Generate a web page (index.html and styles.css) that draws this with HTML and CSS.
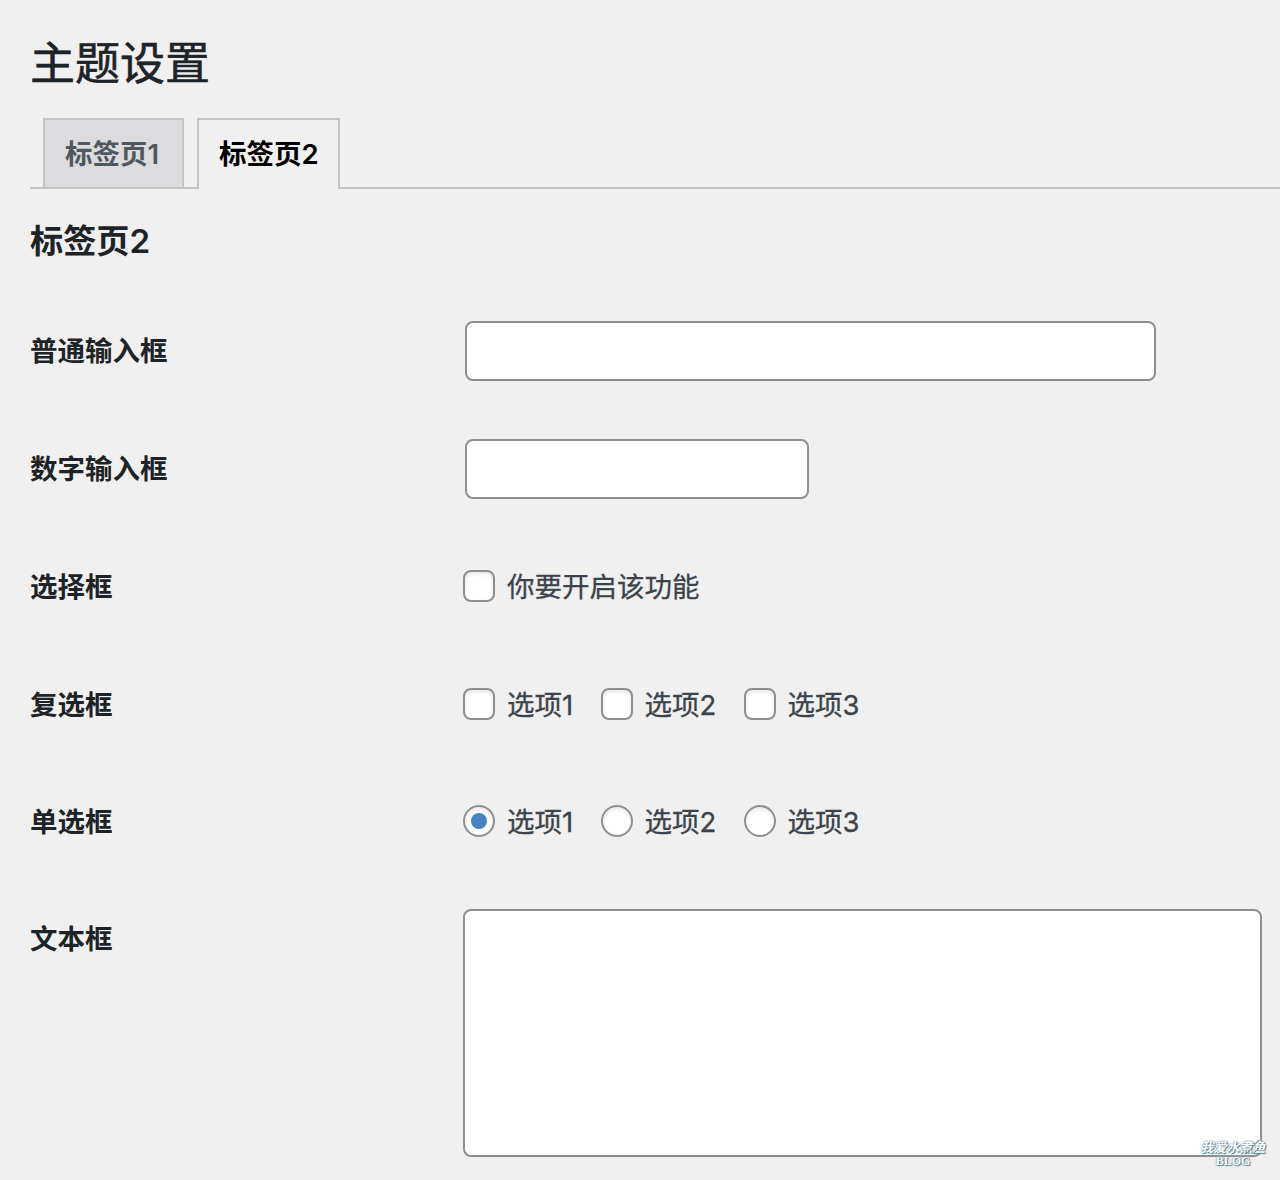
FILE: index.html
```html
<!DOCTYPE html>
<html lang="zh-CN">
<head>
<meta charset="utf-8">
<title>主题设置</title>
<link rel="stylesheet" href="styles.css">
</head>
<body>
<main class="wrap">
  <h1 class="page-title">主题设置</h1>
  <nav class="tabs">
    <a class="tab">标签页1</a>
    <a class="tab tab-active">标签页2</a>
  </nav>
  <h2 class="section-title">标签页2</h2>
  <form class="form">
    <div class="row"><label class="label" for="text">普通输入框</label><input class="input input-wide" id="text" type="text"></div>
    <div class="row"><label class="label" for="number">数字输入框</label><input class="input input-number" id="number" type="text" inputmode="numeric"></div>
    <div class="row"><span class="label">选择框</span>
      <div class="options"><label class="option"><input class="check" type="checkbox">你要开启该功能</label></div>
    </div>
    <div class="row row-short"><span class="label">复选框</span>
      <div class="options">
        <label class="option"><input class="check" type="checkbox">选项1</label>
        <label class="option"><input class="check" type="checkbox">选项2</label>
        <label class="option"><input class="check" type="checkbox">选项3</label>
      </div>
    </div>
    <div class="row row-short"><span class="label">单选框</span>
      <div class="options">
        <label class="option"><input class="check radio" type="radio" name="choice" checked>选项1</label>
        <label class="option"><input class="check radio" type="radio" name="choice">选项2</label>
        <label class="option"><input class="check radio" type="radio" name="choice">选项3</label>
      </div>
    </div>
    <div class="row row-area"><label class="label" for="area">文本框</label><textarea class="area" id="area"></textarea></div>
  </form>
</main>
<div class="watermark">
  <span class="mark-name">我爱水煮鱼</span>
  <span class="mark-blog">BLOG</span>
  <svg class="grip" viewBox="0 0 16 16"><path d="M1 15 14 1M8 15l6-6"/></svg>
</div>
</body>
</html>
```

FILE: styles.css
```css
* { box-sizing: border-box; }
body {
  margin: 0;
  height: 1180px;
  overflow: hidden;
  position: relative;
  background: #f0f0f0;
  color: #1d2327;
  font-family: Inter, "Noto Sans CJK SC", sans-serif;
  font-size: 27.5px;
}
.wrap { padding: 36px 0 0 30px; }
.page-title {
  margin: 0;
  font-size: 45px;
  line-height: 56px;
  font-weight: 400;
  -webkit-text-stroke: .6px;
}
.tabs {
  display: flex;
  gap: 14px;
  height: 71px;
  margin-top: 26px;
  padding-left: 13px;
  border-bottom: 2px solid #c3c4c7;
}
.tab {
  height: 69px;
  width: 141px;
  padding-left: 20px;
  border: 2px solid #c3c4c7;
  border-bottom: 0;
  background: #dcdcde;
  color: #50575e;
  font-weight: 600;
  line-height: 69px;
  white-space: nowrap;
}
.tab-active {
  width: 143px;
  height: 71px;
  margin-left: -1px;
  background: #f0f0f0;
  color: #000;
}
.section-title { margin: 28px 0 0; font-size: 33.2px; line-height: 48px; font-weight: 600; }
.form { margin-top: 27px; }
.row { display: grid; grid-template-columns: 433.4px 1fr; align-items: center; height: 118px; }
.row-short { height: 117px; }
.row-area { height: 300px; align-items: start; }
.label { font-weight: 600; line-height: 40px; }
.row-area .label { margin-top: 39px; }
.input, .area { border: 2px solid #8c8f94; border-radius: 8px; background: #fff; outline: 0; }
.input { height: 60px; margin: 0 0 0 2px; }
.input-wide { width: 691px; }
.input-number { width: 344px; }
.options { display: flex; gap: 27.5px; color: #3c434a; line-height: 40px; -webkit-text-stroke: .3px; }
.option { display: flex; align-items: center; white-space: nowrap; }
.check {
  appearance: none;
  display: grid;
  place-items: center;
  width: 32px;
  height: 32px;
  margin: 0 11.7px 2px 0;
  border: 2px solid #8c8f94;
  border-radius: 8px;
  background: #fff;
  box-shadow: inset 0 2px 4px rgba(0, 0, 0, .1);
}
.radio { border-radius: 50%; }
.radio:checked::before { content: ""; width: 16px; height: 16px; border-radius: 50%; background: #4583c3; }
.area { width: 799px; height: 248px; margin: 29px 0 0; resize: none; }
.watermark {
  position: absolute;
  left: 1199px;
  top: 1139px;
  width: 68px;
  display: flex;
  flex-direction: column;
  align-items: center;
  color: #fff;
  font-family: "Liberation Serif", "Noto Sans CJK SC", serif;
  font-weight: 700;
  text-shadow: 0 0 1px #38748a, 1px 1px 1px #4d8191, 0 0 3px #bcbcae;
}
.mark-name { font-size: 13px; line-height: 17px; font-style: italic; white-space: nowrap; }
.mark-blog { font-size: 12px; line-height: 11px; }
.grip { position: absolute; right: 6px; top: 0; width: 16px; height: 16px; fill: none; stroke: #777; }
```
